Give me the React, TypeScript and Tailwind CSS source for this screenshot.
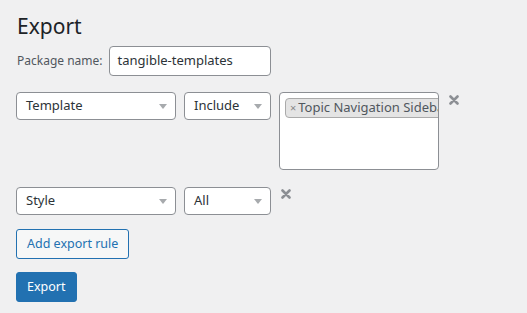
import type { JSX } from 'react';

// WP-admin style export panel — package name + rule rows.
const FONT = { fontFamily: '"Noto Sans", "Open Sans", Arial, sans-serif' };

function Caret(): JSX.Element {
  return (
    <svg width="8" height="5" viewBox="0 0 8 5" aria-hidden="true" className="shrink-0">
      <path d="M0 0h8L4 5z" fill="#a7aaad" />
    </svg>
  );
}

function Select({ label, width }: { label: string; width: string }): JSX.Element {
  return (
    <div
      className={`${width} h-[28px] flex items-center justify-between pl-[9px] pr-[8px] bg-white border border-[#8c8f94] rounded-[4px] text-[13px] text-[#2c3338]`}
    >
      <span>{label}</span>
      <Caret />
    </div>
  );
}

function RemoveIcon(): JSX.Element {
  return (
    <svg width="10" height="10" viewBox="0 0 10 10" aria-hidden="true" className="shrink-0">
      <path d="M1.5 1.5l7 7M8.5 1.5l-7 7" stroke="#8c8f94" strokeWidth="2.6" strokeLinecap="round" />
    </svg>
  );
}

export default function App(): JSX.Element {
  return (
    <div className="w-[527px] h-[313px] bg-[#f0f0f1] pl-[16px] pt-[12px] text-[#1d2327]" style={FONT}>
      <h1 className="text-[21px] leading-[29px] font-normal pl-[1px]">Export</h1>
      <div className="flex items-center gap-[6px] mt-[5px]">
        <label className="text-[12px] text-[#50575e] pl-[1px]">Package name:</label>
        <div className="w-[162px] h-[30px] flex items-center px-[8px] bg-white border border-[#8c8f94] rounded-[4px] text-[13px] text-[#2c3338]">
          tangible-templates
        </div>
      </div>

      <div className="flex items-start gap-[8px] mt-[16px]">
        <Select label="Template" width="w-[160px]" />
        <Select label="Include" width="w-[87px]" />
        <div className="w-[160px] h-[78px] bg-white border border-[#8c8f94] rounded-[4px] overflow-hidden pl-[5px] pt-[5px]">
          <div className="h-[20px] flex items-center whitespace-nowrap bg-[#e4e4e4] border border-[#aaa] rounded-[4px] pl-[4px] text-[13px] text-[#50575e] w-[170px]">
            <span className="text-[11px] text-[#888] mr-[2px]">×</span>
            Topic Navigation Sidebar
          </div>
        </div>
        <div className="pt-[3px] pl-[2px]">
          <RemoveIcon />
        </div>
      </div>

      <div className="flex items-start gap-[8px] mt-[17px]">
        <Select label="Style" width="w-[160px]" />
        <Select label="All" width="w-[87px]" />
        <div className="pt-[2px] pl-[2px]">
          <RemoveIcon />
        </div>
      </div>

      <button
        type="button"
        className="mt-[14px] h-[30px] px-[10px] bg-[#f6f7f7] border border-[#2271b1] rounded-[3px] text-[12.5px] text-[#2271b1]"
      >
        Add export rule
      </button>
      <div>
        <button
          type="button"
          className="mt-[13px] h-[30px] px-[10px] bg-[#2271b1] border border-[#2271b1] rounded-[3px] text-[12.5px] text-white"
        >
          Export
        </button>
      </div>
    </div>
  );
}
